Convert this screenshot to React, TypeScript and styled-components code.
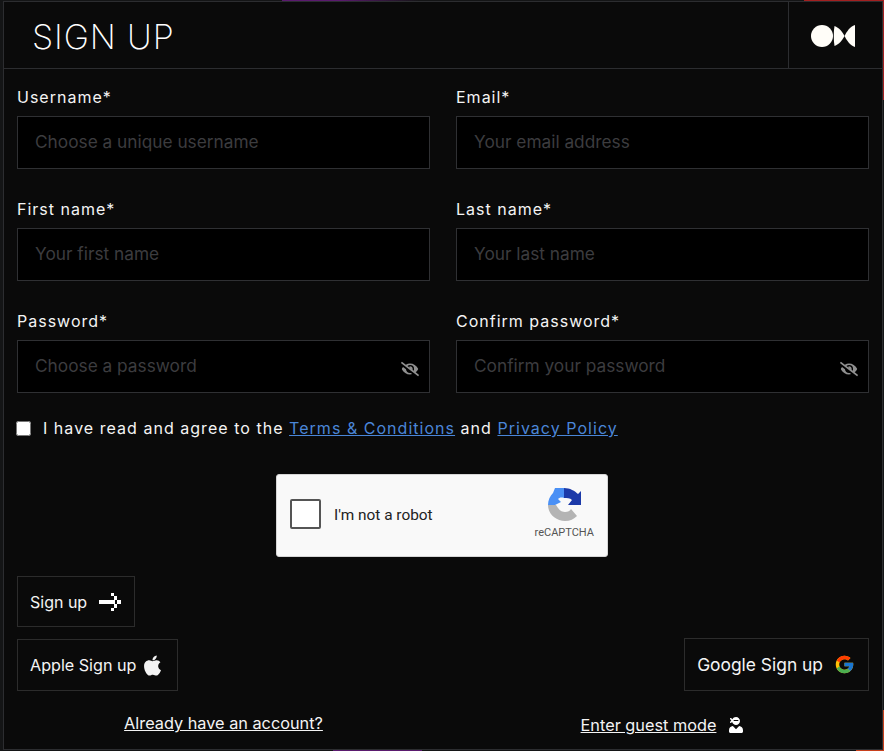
import styled, { createGlobalStyle } from 'styled-components';
import { FaApple, FaEyeSlash, FaUserNinja } from 'react-icons/fa';
import { FcGoogle } from 'react-icons/fc';

const GlobalStyle = createGlobalStyle`
   html, body {
      margin: 0;
      height: 100%;
      background: #141516;
      overflow: hidden;
   }
   * {
      box-sizing: border-box;
   }
`;

const fields = [
   { label: 'Username*', placeholder: 'Choose a unique username' },
   { label: 'Email*', placeholder: 'Your email address' },
   { label: 'First name*', placeholder: 'Your first name' },
   { label: 'Last name*', placeholder: 'Your last name' },
   { label: 'Password*', placeholder: 'Choose a password', secret: true },
   { label: 'Confirm password*', placeholder: 'Confirm your password', secret: true },
];

const PixelArrow = () => (
   <svg width="22" height="18" viewBox="0 0 22 18" fill="#fff" shapeRendering="crispEdges">
      <rect x="0" y="7" width="16" height="4" />
      <rect x="12" y="0" width="3" height="3" />
      <rect x="15" y="3" width="3" height="4" />
      <rect x="18" y="7" width="4" height="4" />
      <rect x="15" y="11" width="3" height="4" />
      <rect x="12" y="15" width="3" height="3" />
   </svg>
);

const Logo = () => (
   <svg width="44" height="22" viewBox="0 0 44 22" fill="#fffdf8">
      <circle cx="11" cy="11" r="11" />
      <path d="M23.5 1 C28 2.5 31.5 7 33.5 11 C31.5 15 28 19.5 23.5 21 C22.5 15 22.5 7 23.5 1 Z" />
      <path d="M44 0 V22 C39 20.5 35.5 15 33.5 11 C35.5 7 39 1.5 44 0 Z" />
   </svg>
);

const RecaptchaLogo = () => (
   <svg width="33" height="33" viewBox="0 0 33 33">
      <path d="M0 17 H8 L10 20 C12 23 15 24 17 24 C20 24 22 23 23 21 L29 28 C26 31 22 33 17 33 C8 33 0 26 0 17 Z" fill="#b4b4b4" />
      <path d="M16 0 C22 0 27 3 30 6 L33 3 V17 H20 L24 12 C22 10 19 10 16 10 Z" fill="#1c3aa9" />
      <path d="M0 17 C0 12 2 8 5 5 L7 0 H16 V10 C13 9 11 10 10 11 L13 14 L7 17 Z" fill="#4a90f5" />
   </svg>
);

const App = () => {
   return (
      <>
         <GlobalStyle />
         <Frame>
            <Panel>
               <Header>
                  <Title>SIGN UP</Title>
                  <LogoCell>
                     <Logo />
                  </LogoCell>
               </Header>
               <Body>
                  <FieldGrid>
                     {fields.map(field => (
                        <Field key={field.label}>
                           <Label>{field.label}</Label>
                           <InputBox>
                              <Input placeholder={field.placeholder} readOnly />
                              {field.secret && (
                                 <EyeIcon>
                                    <FaEyeSlash size={18} />
                                 </EyeIcon>
                              )}
                           </InputBox>
                        </Field>
                     ))}
                  </FieldGrid>
                  <Agreement>
                     <Checkbox type="checkbox" readOnly />
                     <span>
                        I have read and agree to the <InlineLink>Terms &amp; Conditions</InlineLink> and{' '}
                        <InlineLink>Privacy Policy</InlineLink>
                     </span>
                  </Agreement>
                  <Captcha>
                     <CaptchaBox />
                     <CaptchaText>I'm not a robot</CaptchaText>
                     <CaptchaBrand>
                        <RecaptchaLogo />
                        <small>reCAPTCHA</small>
                     </CaptchaBrand>
                  </Captcha>
                  <ActionButton $height={51} $gap={12} $size={16}>
                     Sign up
                     <PixelArrow />
                  </ActionButton>
                  <ProviderRow>
                     <ActionButton $height={52} $gap={5} $size={16.15}>
                        Apple Sign up
                        <FaApple size={23} />
                     </ActionButton>
                     <ActionButton $height={53} $gap={11} $size={17.4}>
                        Google Sign up
                        <FcGoogle size={21} />
                     </ActionButton>
                  </ProviderRow>
                  <FooterGrid>
                     <FooterLink>Already have an account?</FooterLink>
                     <GuestEntry>
                        <FooterLink>Enter guest mode</FooterLink>
                        <FaUserNinja size={16} color="#fff" />
                     </GuestEntry>
                  </FooterGrid>
               </Body>
            </Panel>
         </Frame>
      </>
   );
};
export default App;

const Frame = styled.div`
   width: 884px;
   height: 751px;
   padding: 1px 1px 1px 3px;
   background:
      linear-gradient(90deg, transparent 282px, #5a1a6e 282px, #5a1a6e 340px, transparent 420px, transparent 804px, #a32020 804px) top / 100% 1px no-repeat,
      linear-gradient(90deg, transparent 333px, #5a1a6e 333px, #5a1a6e 422px, transparent 422px, transparent 856px, #c8401c 856px) bottom / 100% 1px no-repeat,
      linear-gradient(180deg, #a32020 100px, transparent 100px, transparent 710px, #c8401c 710px) right / 1px 100% no-repeat;
`;
const Panel = styled.main`
   height: 749px;
   background: #0a0a0a;
   border: 1px solid #2c2d30;
   font-family: Inter, 'Liberation Sans', sans-serif;
   color: #f4f4f4;
`;
const Header = styled.header`
   display: flex;
   justify-content: space-between;
   height: 67px;
   border-bottom: 1px solid #2c2d30;
`;
const Title = styled.h1`
   margin: 0;
   padding: 15px 0 0 28px;
   font-size: 34px;
   line-height: 40px;
   font-weight: 200;
   letter-spacing: 0.9px;
   color: #fff;
`;
const LogoCell = styled.div`
   display: flex;
   align-items: center;
   justify-content: center;
   width: 94px;
   border-left: 1px solid #2c2d30;
   padding: 2px 5px 0 0;
`;
const Body = styled.div`
   padding: 0 13px;
`;
const FieldGrid = styled.div`
   display: grid;
   grid-template-columns: 413px 413px;
   column-gap: 26px;
   row-gap: 30px;
   padding-top: 18px;
`;
const Field = styled.div`
   display: flex;
   flex-direction: column;
   gap: 9px;
`;
const Label = styled.label`
   font-size: 16px;
   line-height: 20px;
   letter-spacing: 1px;
`;
const InputBox = styled.div`
   position: relative;
   height: 53px;
   background: #000;
   border: 1px solid #2f3033;
`;
const Input = styled.input`
   width: 100%;
   height: 100%;
   padding: 0 17px 2px;
   border: none;
   outline: none;
   background: transparent;
   color: #fff;
   font-family: inherit;
   font-size: 17.28px;
   &::placeholder {
      color: #3c3c3f;
      opacity: 1;
   }
`;
const EyeIcon = styled.span`
   position: absolute;
   right: 10px;
   top: 19px;
   color: #8f8f8f;
   line-height: 0;
`;
const Agreement = styled.div`
   display: flex;
   align-items: center;
   gap: 12px;
   height: 20px;
   margin-top: 25px;
   font-size: 16px;
   letter-spacing: 1.03px;
`;
const Checkbox = styled.input`
   flex: none;
   width: 15px;
   height: 15px;
   margin: 0 0 0 -1px;
`;
const InlineLink = styled.a`
   color: #4a86d8;
   text-decoration: underline;
`;
const Captcha = styled.div`
   display: flex;
   align-items: center;
   width: 332px;
   height: 83px;
   margin: 36px 0 19px 259px;
   padding: 0 13px 4px;
   background: #f9f9f9;
   border: 1px solid #d6d6d6;
   border-radius: 3px;
   font-family: Roboto, Arial, sans-serif;
   color: #222;
`;
const CaptchaBox = styled.div`
   flex: none;
   width: 31px;
   height: 30px;
   background: #fff;
   border: 2px solid #555;
   border-radius: 2px;
`;
const CaptchaText = styled.span`
   flex: 1;
   margin-left: 13px;
   padding-top: 2px;
   font-size: 15.4px;
`;
const CaptchaBrand = styled.div`
   display: flex;
   flex-direction: column;
   align-items: center;
   gap: 5px;
   small {
      font-size: 11px;
      color: #555;
   }
`;
const ActionButton = styled.button<{ $height: number; $gap: number; $size: number }>`
   display: flex;
   align-items: center;
   gap: ${props => props.$gap}px;
   height: ${props => props.$height}px;
   padding: 0 13px 0 12px;
   background: transparent;
   border: 1px solid #2c2c2c;
   color: #f4f4f4;
   font-family: inherit;
   font-size: ${props => props.$size}px;
   svg {
      flex: none;
   }
`;
const ProviderRow = styled.div`
   display: flex;
   align-items: flex-end;
   justify-content: space-between;
   margin-top: 11px;
`;
const FooterGrid = styled.div`
   display: grid;
   grid-template-columns: 413px 413px;
   column-gap: 26px;
   justify-items: center;
   margin-top: 22px;
`;
const FooterLink = styled.a`
   font-size: 16.3px;
   line-height: 20px;
   color: #f4f4f4;
   text-decoration: underline;
`;
const GuestEntry = styled.div`
   display: flex;
   align-items: center;
   gap: 12px;
   padding-top: 2px;
`;
